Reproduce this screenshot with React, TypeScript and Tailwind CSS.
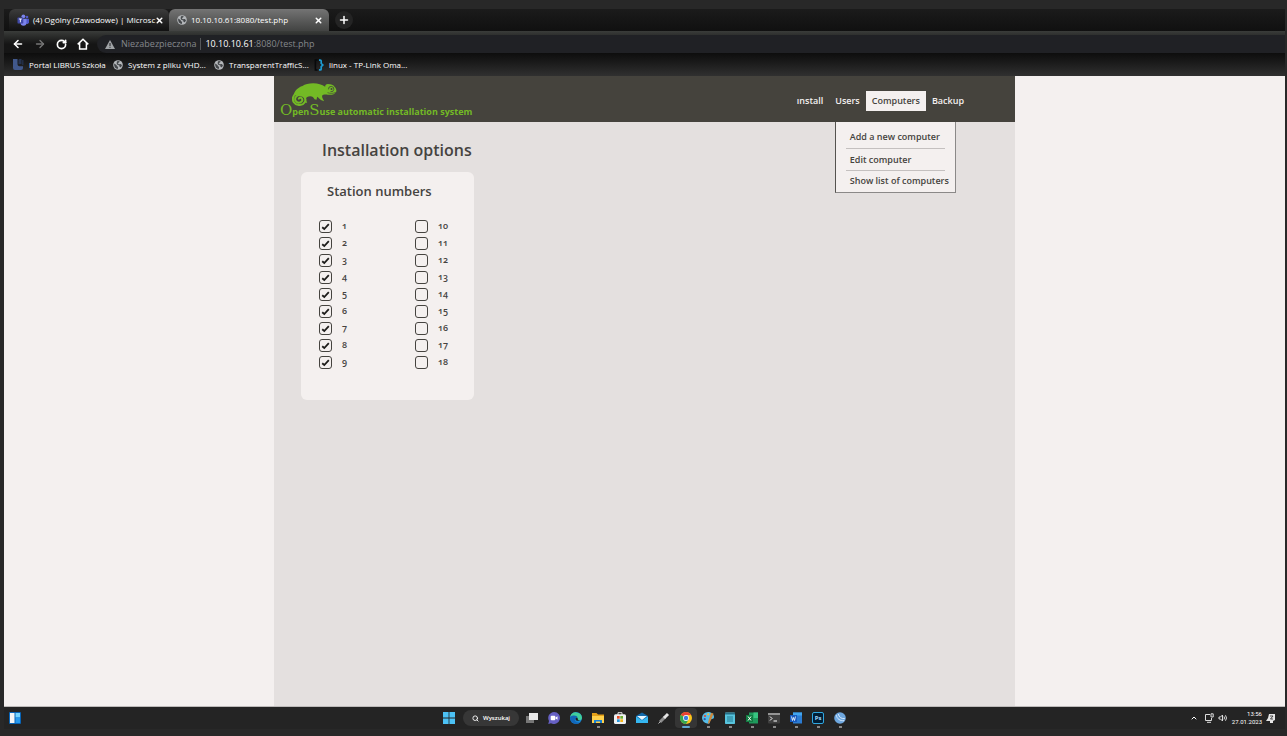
import type { ReactNode } from 'react';
import { ArrowLeft, ArrowRight, ChevronUp, Plus, RotateCw, Search, X } from 'lucide-react';

const bodyFont = "font-['Open_Sans','Noto_Sans',sans-serif]";

function TeamsIcon() {
  return (
    <svg viewBox="0 0 12 12" className="size-3 shrink-0" aria-hidden="true">
      <circle cx="6.4" cy="2.3" r="1.9" fill="#7b83eb" />
      <circle cx="10" cy="3" r="1.3" fill="#5059c9" />
      <path d="M8.5 4.8H12v3.4a2.2 2.2 0 0 1-3.5 1.4z" fill="#5059c9" />
      <path d="M3.5 4.8h6v4a3 3 0 0 1-6 0z" fill="#7b83eb" />
      <rect x="0.5" y="3.6" width="5.8" height="5.8" rx="0.6" fill="#4049a8" />
      <path d="M1.9 5h3M3.4 5v3.3" stroke="#fff" strokeWidth="0.9" />
    </svg>
  );
}

function GlobeIcon() {
  return (
    <svg viewBox="0 0 10 10" className="size-2.5 shrink-0" aria-hidden="true">
      <circle cx="5" cy="5" r="4.8" fill="#b4b7ba" />
      <path d="M1.1 3.6 3.6 5l.3 1.3 1.3.5-.4 2.2C2.4 8.9.9 6.9 1.1 3.6zM4 1.2l2.6-.1-.5 1.3-1.4.5 1 1.3 2.1-.1 1.2 1.1-1.1 2-1.3-.3-.3-1.5-2-.6-.7-1.5z" fill="#44474a" />
    </svg>
  );
}

function LibrusIcon() {
  return (
    <svg viewBox="0 0 11 11" className="size-[11px] shrink-0" aria-hidden="true">
      <path d="M0 0h4.5v5.2a2 2 0 0 0 2 2H10V9a2 2 0 0 1-2 2H2a2 2 0 0 1-2-2z" fill="#41588b" />
      <path d="M5.5 1.2A1.2 1.2 0 0 1 6.7 0H8.5v5h-3z" fill="#25324f" />
      <rect x="9.2" y="1" width="1.2" height="5" fill="#25324f" />
    </svg>
  );
}

function BraceIcon() {
  return (
    <svg viewBox="0 0 10 12" className="h-3 w-2.5 shrink-0" fill="none" aria-hidden="true">
      <path d="M3.6 1H1.4v10h2.2" stroke="#08090a" strokeWidth="1.6" />
      <path d="M5 1.1h1.2q1 0 1 1v2.3L8.8 6 7.2 7.6v2.3q0 1-1 1H5" stroke="#1c9bd3" strokeWidth="1.7" />
    </svg>
  );
}

function Chameleon() {
  return (
    <svg viewBox="0 0 134 69" className="h-[23px] w-[45px]" aria-hidden="true">
      <path
        d="M4 37C7 24 17 13 31 9 38 4 50 1 63 1c15 0 26 4 36 10 0-5 3-8 8-8 10 0 17 3 20 8 5 5 7 11 5 16-5 8-14 9-25 8-7-1-15-1-17 3-2 5 4 11 6 17l-8-3c-5-3-9-8-13-11l-2 9-6-1c-3-5-6-9-13-9-7 1-12 3-13 7 0 5 3 8 4 12H40c-2-8-3-14-8-18z"
        fill="#73ba25"
      />
      <path
        d="M5 38C-3 52 7 67 23 66c14-1 21-14 14-24-6-9-20-9-26 0-5 8 0 17 9 17 8 0 12-6 10-11-2-4-8-5-10-1"
        fill="none"
        stroke="#73ba25"
        strokeWidth="6"
        strokeLinecap="round"
      />
      <path d="M109 19a8 8 0 1 1 6 7" fill="none" stroke="#45433d" strokeWidth="2.5" />
      <circle cx="118" cy="18" r="3" fill="#45433d" />
      <path d="M106 29c9 3 17 3 25-1" stroke="#45433d" strokeWidth="2" fill="none" />
    </svg>
  );
}

function Tab({ icon, title, active }: { icon: ReactNode; title: string; active?: boolean }) {
  return (
    <div
      className={`flex h-[22px] w-40 items-center rounded-t-md pr-1.5 pl-2 ${
        active ? 'bg-linear-to-b from-[#747474] to-[#424342]' : 'bg-linear-to-b from-[#3c3c3c] to-[#111111]'
      }`}
    >
      {icon}
      <a href="#" className="ml-1 flex-1 text-[8px] leading-3 whitespace-nowrap text-white">
        {title}
      </a>
      <button type="button" aria-label="Close tab" className="text-white">
        <X className="size-[9px]" strokeWidth={4} />
      </button>
    </div>
  );
}

function Browser() {
  return (
    <header className="text-white">
      <div className="flex h-[22px] items-center bg-linear-to-b from-[#1b1b1b] to-[#101010] pl-[5px]">
        <Tab icon={<TeamsIcon />} title="(4) Ogólny (Zawodowe) | Microsc" />
        <Tab icon={<GlobeIcon />} title="10.10.10.61:8080/test.php" active />
        <button type="button" aria-label="New tab" className="ml-1.5 flex size-[18px] items-center justify-center rounded-full bg-[#242424]">
          <Plus className="size-3" strokeWidth={3} />
        </button>
      </div>
      <div className="flex h-[22px] items-center bg-linear-to-b from-[#3a3c3a] to-[#151515] to-60% pt-1 pl-2">
        <nav className="flex items-center gap-2.5">
          <button type="button" aria-label="Back"><ArrowLeft className="size-3" strokeWidth={3.2} /></button>
          <button type="button" aria-label="Forward" className="text-[#777777]"><ArrowRight className="size-3" strokeWidth={2.6} /></button>
          <button type="button" aria-label="Reload"><RotateCw className="size-[11px]" strokeWidth={3.6} /></button>
          <button type="button" aria-label="Home">
            <svg viewBox="0 0 12 12" className="size-3" fill="none" stroke="currentColor" strokeWidth="1.5" aria-hidden="true">
              <path d="M.7 6.4 6 1.2l5.3 5.2M2.6 5v6h6.8V5" />
            </svg>
          </button>
        </nav>
        <div className="ml-2 flex h-[18px] flex-1 items-center rounded-l-full bg-[#202125] pl-2 text-[9px] leading-4 text-[#85888c]">
          <svg viewBox="0 0 10 9" className="mr-1.5 h-[9px] w-2.5" aria-hidden="true">
            <path d="M5 0 10 9H0z" fill="#a0a3a6" />
            <path d="M5 3v3M5 6.8v1" stroke="#202125" strokeWidth="1" />
          </svg>
          <span>Niezabezpieczona</span>
          <span className="mx-1 h-3 w-px bg-[#55575a]" />
          <span><span className="text-white">10.10.10.61</span>:8080/test.php</span>
        </div>
      </div>
      <nav className="flex h-[23px] items-center bg-linear-to-b from-[#0d0d0d] to-[#303030] pl-[9px] text-[8px] leading-3">
        <a href="#" className="flex w-[100px] items-center gap-[5px] whitespace-nowrap"><LibrusIcon />Portal LIBRUS Szkoła</a>
        <a href="#" className="flex w-[101px] items-center gap-[5px] whitespace-nowrap"><GlobeIcon />System z pliku VHD...</a>
        <a href="#" className="flex w-[100px] items-center gap-[5px] whitespace-nowrap"><GlobeIcon />TransparentTrafficS...</a>
        <a href="#" className="flex items-center gap-[5px] whitespace-nowrap"><BraceIcon />linux - TP-Link Oma...</a>
      </nav>
    </header>
  );
}

function SiteHeader() {
  return (
    <header className="flex h-[46px] items-center justify-between bg-[#45433d] pr-[51px] pl-1.5">
      <a href="#" className="flex flex-col pt-1 text-[#73ba25]">
        <span className="ml-3 flex"><Chameleon /></span>
        <span className="-mt-1 text-[9px] leading-4 font-bold whitespace-nowrap">
          <span className="font-['DejaVu_Serif',serif] text-[15px] font-normal">O</span>pen
          <span className="font-['DejaVu_Serif',serif] text-[15px] font-normal">S</span>use automatic installation system
        </span>
      </a>
      <nav className="mt-1 flex items-center text-[9px] leading-5 font-semibold text-[#f4f0ef]">
        <a href="#" className="px-1.5">ınstall</a>
        <a href="#" className="px-1.5">Users</a>
        <div className="relative">
          <a href="#" className="block bg-[#f4f0ef] px-1.5 text-[#45433d]">Computers</a>
          <div className="absolute top-[31px] -left-[31px] w-[121px] border border-t-0 border-[#8b8988] border-l-[#55534f] bg-[#f4f0ef] px-2.5 pt-1 pb-px text-[#45433d]">
            <a href="#" className="block border-b border-[#c4c0bf] pl-1 leading-[22px] whitespace-nowrap">Add a new computer</a>
            <a href="#" className="block border-b border-[#c4c0bf] pl-1 leading-[21px] whitespace-nowrap">Edit computer</a>
            <a href="#" className="block pl-1 leading-5 whitespace-nowrap">Show list of computers</a>
          </div>
        </div>
        <a href="#" className="pl-1.5">Backup</a>
      </nav>
    </header>
  );
}

function Station({ number, checked }: { number: number; checked: boolean }) {
  return (
    <label className="flex h-[17px] items-center text-[9px] leading-3 font-semibold oldstyle-nums">
      <span className="relative flex">
        <input
          type="checkbox"
          defaultChecked={checked}
          className="peer size-[13px] appearance-none rounded-[3px] border border-[#45433f]"
        />
        <svg viewBox="0 0 13 13" className="pointer-events-none absolute inset-0 hidden size-[13px] peer-checked:block" fill="none" aria-hidden="true">
          <path d="M3.2 7.2 5.3 9 9.8 4.2" stroke="#1d1c1a" strokeWidth="1.8" />
        </svg>
      </span>
      <span className="ml-2.5 pb-0.5">{number}</span>
    </label>
  );
}

function Site() {
  return (
    <main className="flex flex-1 border-b border-[#bdbab9] bg-[#f4f0ef] text-[#45433f]">
      <div className="mx-auto w-full max-w-[741px] bg-[#e4e0df]">
        <SiteHeader />
        <h1 className="mt-4 pl-12 text-base leading-6 font-semibold">Installation options</h1>
        <section className="mt-2.5 ml-[27px] h-[228px] w-[173px] rounded-md bg-[#f4f0ef] pt-[7px] pl-[18px]">
          <h2 className="pl-2 text-[13px] leading-6 font-semibold">Station numbers</h2>
          <div className="mt-[15px] flex gap-[58px]">
            {[0, 9].map((start) => (
              <div key={start} className="w-[38px]">
                {Array.from({ length: 9 }, (_, i) => (
                  <Station key={i} number={start + i + 1} checked={start === 0} />
                ))}
              </div>
            ))}
          </div>
        </section>
      </div>
    </main>
  );
}

const svgProps = { viewBox: '0 0 12 12', className: 'size-3', 'aria-hidden': true } as const;

const apps: { name: string; running?: boolean; active?: boolean; icon: ReactNode }[] = [
  { name: 'Task view', icon: <svg {...svgProps}><rect x="0" y="4" width="8" height="7" fill="#777" /><rect x="3" y="1" width="9" height="7" fill="#e8e8e8" /></svg> },
  { name: 'Chat', icon: <svg {...svgProps}><path d="M6 0a6 6 0 1 1-3 11.2L.3 12 1 9A6 6 0 0 1 6 0z" fill="#6660c3" /><rect x="2.7" y="3.7" width="4.6" height="4.6" rx="1" fill="#fff" /><path d="m7.5 5.5 2-1.3v3.6l-2-1.3z" fill="#fff" /></svg> },
  { name: 'Edge', icon: <svg {...svgProps}><circle cx="6" cy="6" r="6" fill="#1686d5" /><path d="M.2 5A6 6 0 0 1 12 5.7c0 2-2 3-4.4 2.4C8.5 5 4 3 .2 5z" fill="#41cf9b" /><path d="M.2 5C3 2.6 7 3.4 7.8 5.7 6 5 4.5 6 4.8 8s2.7 3 5.7 2A6 6 0 0 1 .2 5z" fill="#1266b8" /><path d="M5.6 6.2c1-.8 2.2-.4 2.1.6-.1.9.8 1.7 2.3 1.5C7.8 9.6 5 8.4 5.6 6.2z" fill="#202020" /></svg> },
  { name: 'Explorer', running: true, icon: <svg {...svgProps}><path d="M0 1h4.5L6 2.5h6V11H0z" fill="#e5a018" /><path d="M0 4h12v7H0z" fill="#ffd04c" /><path d="M2 8h8v3H8V9.5H4V11H2z" fill="#1681d5" /></svg> },
  { name: 'Store', icon: <svg {...svgProps}><path d="M4 3V.7h4V3" fill="none" stroke="#dedede" strokeWidth="1" /><rect y="2.3" width="12" height="9.7" rx="1.5" fill="#eef1f3" /><path d="M3 4h2.7v2.7H3z" fill="#e84b25" /><path d="M6.3 4H9v2.7H6.3z" fill="#6bad31" /><path d="M3 7.3h2.7V10H3z" fill="#2897dc" /><path d="M6.3 7.3H9V10H6.3z" fill="#f5b51a" /></svg> },
  { name: 'Mail', icon: <svg {...svgProps}><path d="m0 4 6-3.5L12 4v7H0z" fill="#1269aa" /><path d="M1 4h10L6 8z" fill="#eaf7ff" /><path d="m0 4.5 6 4 6-4V11H0z" fill="#35b7f1" /></svg> },
  { name: 'Pen', icon: <svg {...svgProps}><path d="m2 10 5-5" stroke="#8d8d8d" strokeWidth="3" /><path d="m6 6 4-4" stroke="#e5e5e5" strokeWidth="3" /><path d="m.5 11.5 2-2" stroke="#bbb" /></svg> },
  { name: 'Chrome', active: true, icon: <svg {...svgProps}><circle cx="6" cy="6" r="6" fill="#fac51c" /><path d="M6 6 .8 3A6 6 0 0 1 11.2 3H6z" fill="#e94235" /><path d="M6 6 .8 3A6 6 0 0 0 6 12l2.6-4.5z" fill="#34a853" /><circle cx="6" cy="6" r="2.9" fill="#fff" /><circle cx="6" cy="6" r="2.2" fill="#3f7be0" /></svg> },
  { name: 'Paint', running: true, icon: <svg {...svgProps}><path d="M6 0c4 0 6 2.5 6 5 0 3-4 1-4 4 0 2-1 3-3 2.5C2 11 0 8.5 0 6a6 6 0 0 1 6-6z" fill="#55bde8" /><circle cx="3" cy="4" r="1.1" fill="#e14932" /><circle cx="6.2" cy="2.3" r="1.1" fill="#f5bd37" /><circle cx="2.7" cy="7.2" r="1.1" fill="#3353a8" /><path d="m9 1 2.5.6L9 8l-2 4-1-1 1-4z" fill="#cd883c" /></svg> },
  { name: 'Notepad', running: true, icon: <svg {...svgProps}><rect x="1" y=".5" width="10" height="11.5" rx=".7" fill="#58c4dd" /><path d="M1 1h10v1.5H1z" fill="#256e86" /><path d="M3 5h6M3 7h6M3 9h6" stroke="#19677f" strokeWidth=".8" /></svg> },
  { name: 'Excel', running: true, icon: <svg {...svgProps}><path d="M3 .5h9v11H3z" fill="#1f9a5c" /><path d="M7.5.5H12V6H7.5z" fill="#38c481" /><rect y="3" width="7" height="7" fill="#107c41" /><path d="m2 4.5 3 4m0-4-3 4" stroke="#fff" strokeWidth="1" /></svg> },
  { name: 'Terminal', running: true, icon: <svg {...svgProps}><rect y="1" width="12" height="10.5" rx="1" fill="#3f3f3f" /><path d="M0 2h12" stroke="#aaa" strokeWidth="1.6" /><path d="m2 4.5 2 2-2 2M5.5 9H9" stroke="#fff" fill="none" /></svg> },
  { name: 'Word', running: true, icon: <svg {...svgProps}><path d="M3 .5h9v11H3z" fill="#2b7cd3" /><path d="M3 .5h9v3H3z" fill="#41a5ee" /><rect y="3" width="7" height="7" fill="#185abd" /><path d="m1.5 4.5 1 4 1-3 1 3 1-4" stroke="#fff" fill="none" strokeWidth=".8" /></svg> },
  { name: 'Photoshop', running: true, icon: <svg {...svgProps}><rect x=".5" y=".5" width="11" height="11" rx="1.5" fill="#001e36" stroke="#31a8e0" /><text x="6" y="8.4" textAnchor="middle" fontSize="6" fontWeight="700" fill="#a6dcff" fontFamily="Open Sans, sans-serif">Ps</text></svg> },
  { name: 'Remote', running: true, icon: <svg {...svgProps}><circle cx="6" cy="6" r="5.8" fill="#6ea7df" /><path d="M2.3 3.2C3 7 6 9 10.2 8.7M4.4 2c.4 3 2.7 5 6.4 4.6" fill="none" stroke="#d7eaff" strokeWidth="1" /></svg> },
];

function Taskbar() {
  return (
    <footer className="flex h-[22px] items-center bg-[#242424] text-white">
      <div className="flex-1 pl-[5px]">
        <button type="button" aria-label="Widgets" className="flex">
          <svg {...svgProps}><rect width="12" height="12" rx="1" fill="#0864b7" /><path d="M1 1h4.5v10H1z" fill="#f5f5f5" /><path d="M6.5 1H11v4.5H6.5z" fill="#75d4ff" /><path d="M6.5 5.5H11V11H6.5z" fill="#2899ec" /></svg>
        </button>
      </div>
      <div className="flex items-center pl-2.5">
        <button type="button" aria-label="Start" className="mr-2">
          <svg {...svgProps}><path d="M0 0h5.6v5.6H0zM6.4 0H12v5.6H6.4zM0 6.4h5.6V12H0zM6.4 6.4H12V12H6.4z" fill="#4cc2f5" /></svg>
        </button>
        <button type="button" className="mr-0.5 flex h-4 w-14 items-center justify-center gap-1 rounded-full bg-[#373737] text-[6px] leading-3 font-semibold">
          <Search className="size-[7px]" strokeWidth={3} />Wyszukaj
        </button>
        {apps.map((app) => (
          <button
            type="button"
            key={app.name}
            aria-label={app.name}
            className={`relative flex h-5 w-[22px] items-center justify-center rounded-sm ${app.active ? 'bg-[#353535]' : ''}`}
          >
            {app.icon}
            {app.active && <span className="absolute bottom-0 h-0.5 w-2 rounded-full bg-[#60a7d3]" />}
            {app.running && <span className="absolute bottom-0 h-0.5 w-[3px] bg-[#888888]" />}
          </button>
        ))}
      </div>
      <div className="flex flex-1 items-center justify-end gap-1 pr-2.5">
        <ChevronUp className="size-2" strokeWidth={3} />
        <svg viewBox="0 0 10 10" className="ml-0.5 size-2.5" fill="none" stroke="#ddd" aria-hidden="true"><path d="M6 1.5H1.5v6h6V5M3 9.3h4M7 .8h2.2V4H7z" /></svg>
        <svg viewBox="0 0 10 10" className="size-2.5" fill="none" stroke="#ddd" aria-hidden="true"><path d="M1 4h1.5l2-2v6l-2-2H1zM6 3.5q1 1.5 0 3M7.5 2.3q2 2.7 0 5.4" /></svg>
        <div className="text-right font-['Roboto',sans-serif] text-[6px] leading-2"><div>13:56</div><div>27.01.2023</div></div>
        <svg viewBox="0 0 9 9" className="size-[9px]" aria-hidden="true"><path d="M3 0h6v6L7 7v2H4V7H0l2-3z" fill="#e5e5e5" /><path d="M4 2h3L4.5 5H7" stroke="#242424" fill="none" strokeWidth=".8" /></svg>
      </div>
    </footer>
  );
}

export default function App() {
  return (
    <div className={`${bodyFont} flex min-h-screen flex-col bg-[#282828] pt-[9px] pr-0.5 pb-[7px] pl-1`}>
      <Browser />
      <Site />
      <Taskbar />
    </div>
  );
}
